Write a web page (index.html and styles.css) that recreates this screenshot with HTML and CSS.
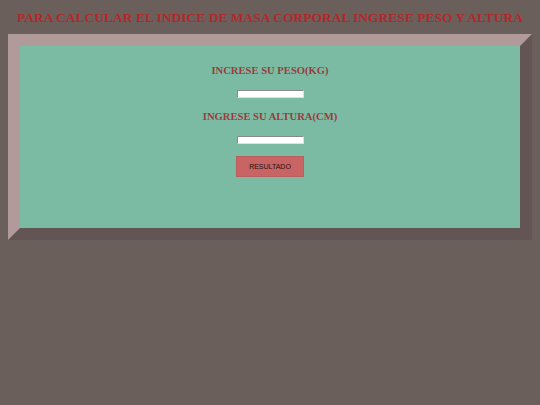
FILE: index.html
```html
<!DOCTYPE html>
<html>
<head>
<meta charset="utf-8">
<link rel="stylesheet" href="styles.css">
</head>
<body>
<h1 class="title">PARA CALCULAR EL INDICE DE MASA CORPORAL INGRESE PESO Y ALTURA</h1>
<div class="panel">
  <div class="form">
    <label class="label">INCRESE SU PESO(KG)</label>
    <input class="field" type="text">
    <label class="label">INGRESE SU ALTURA(CM)</label>
    <input class="field" type="text">
    <button class="btn">RESULTADO</button>
  </div>
</div>
</body>
</html>
```
FILE: styles.css
```css
html, body {
  background: #6b5f5b;
}
body {
  margin: 8px;
}
.title {
  margin: 0;
  padding-top: 2px;
  height: 24px;
  text-align: center;
  white-space: nowrap;
  font-family: "Liberation Serif", serif;
  font-weight: bold;
  font-size: 13.5px;
  color: #b2282a;
  line-height: 16px;
}
.panel {
  background: #7bbba4;
  border-style: solid;
  border-width: 12px;
  border-color: #b09a9a #625553 #625553 #b09a9a;
  height: 182px;
  box-sizing: content-box;
}
.form {
  display: flex;
  flex-direction: column;
  align-items: center;
  padding-top: 18px;
}
.label {
  font-family: "Liberation Serif", serif;
  font-weight: bold;
  font-size: 10.6px;
  line-height: 14px;
  color: #9a3c3c;
}
.field {
  margin-top: 12px;
  margin-bottom: 12px;
  width: 67px;
  height: 8px;
  padding: 0;
  border: 1px solid;
  border-color: #8a8a8a #e0e0e0 #e0e0e0 #8a8a8a;
  background: #fff;
  box-sizing: border-box;
}
.btn {
  margin-top: 0;
  width: 68px;
  height: 21px;
  padding: 0;
  background: #c86464;
  border: 1px solid #b86060;
  font-family: "Liberation Sans", Arial, sans-serif;
  font-size: 7px;
  color: #2a1212;
}
```
